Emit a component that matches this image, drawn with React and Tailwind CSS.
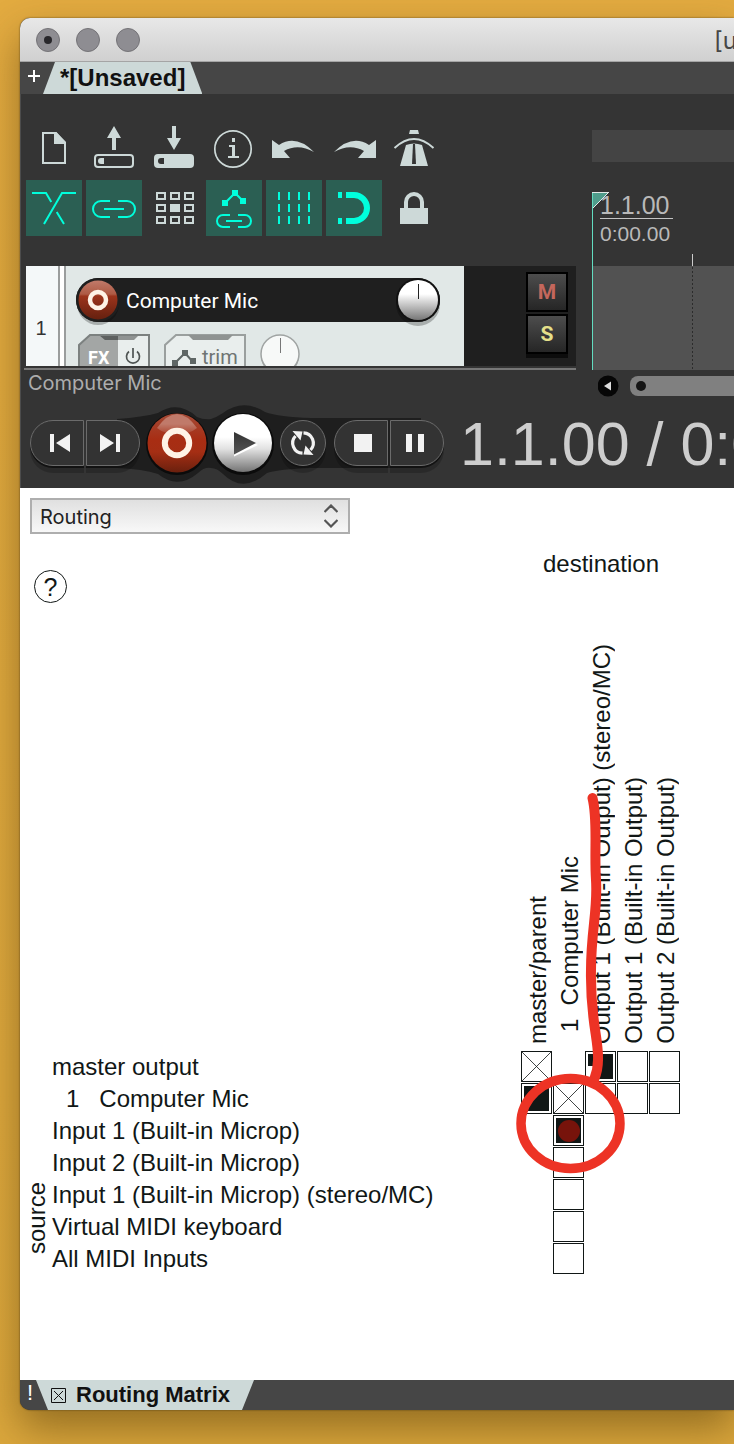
import React from "react";

const PALE = "#cdd9d8";
const TEAL = "#00ffdc";

const toolIcons = [
  {
    label: "New project",
    art: (
      <g>
        <path d="M17 13H30L39 23V43H17Z" fill="none" stroke={PALE} strokeWidth="2" />
        <path d="M28 12H30L40 22V24H28Z" fill={PALE} />
      </g>
    ),
  },
  {
    label: "Open project",
    art: (
      <g>
        <path d="M28 6L35 18H30V30H26V18H21Z" fill={PALE} />
        <rect x="9" y="35" width="38" height="12" rx="3" fill="none" stroke={PALE} strokeWidth="2" />
        <path d="M18 38V44H15a3 3 0 0 1 0-6Z" fill={PALE} />
      </g>
    ),
  },
  {
    label: "Save project",
    art: (
      <g>
        <path d="M26 6H30V18H35L28 30L21 18H26Z" fill={PALE} />
        <rect x="8" y="34" width="40" height="14" rx="4" fill={PALE} />
        <path d="M18 38V44H15a3 3 0 0 1 0-6Z" fill="#343434" />
      </g>
    ),
  },
  {
    label: "Project settings",
    art: (
      <g>
        <circle cx="27" cy="29" r="18.2" fill="none" stroke={PALE} strokeWidth="1.7" />
        <path d="M26 18h3v4h-3ZM23 25h6v11h4v2H22v-2h4v-9h-3Z" fill={PALE} />
      </g>
    ),
  },
  {
    label: "Undo",
    art: <path d="M6 20V38H24L18 31Q32 23 48 32Q30 14 13 25Z" fill={PALE} />,
  },
  {
    label: "Redo",
    art: <path d="M50 20V38H32L38 31Q24 23 8 32Q26 14 43 25Z" fill={PALE} />,
  },
  {
    label: "Metronome",
    art: (
      <g>
        <path d="M24 10H32L33 14H23Z" fill={PALE} />
        <path d="M8.500 28Q28 10 47.500 28" fill="none" stroke={PALE} strokeWidth="2" />
        <path d="M20 25Q28 22 36 25L42 46H14Z" fill={PALE} />
        <path d="M27 24H29L30 44H26Z" fill="#343434" />
      </g>
    ),
  },
  {
    label: "Auto crossfade",
    on: true,
    art: (
      <path d="M6 13H20L25.300 22M30.700 32L38 44M50 13H36L18 44" fill="none" stroke={TEAL} strokeWidth="2" />
    ),
  },
  {
    label: "Item grouping",
    on: true,
    art: (
      <path
        d="M24 21H15a8 8 0 0 0 0 16H24M32 21H41a8 8 0 0 1 0 16H32M18 29H38"
        fill="none"
        stroke={TEAL}
        strokeWidth="2"
      />
    ),
  },
  {
    label: "Ripple editing",
    art: (
      <g fill="none" stroke={PALE} strokeWidth="2">
        {[11, 25, 39].map((x) =>
          [13, 25, 37].map((y) => (
            <rect
              key={x + "-" + y}
              x={x}
              y={y}
              width="8"
              height="6"
              fill={x === 25 && y === 25 ? PALE : "none"}
            />
          ))
        )}
      </g>
    ),
  },
  {
    label: "Move envelopes with items",
    on: true,
    art: (
      <g>
        <path d="M19 23L29 13L37 21" fill="none" stroke={TEAL} strokeWidth="2" />
        <path d="M16 20h6v6h-6ZM26 10h6v6h-6ZM34 18h6v6h-6Z" fill={TEAL} />
        <path
          d="M24 35H17a6 6 0 0 0 0 12H24M32 35H39a6 6 0 0 1 0 12H32M20 41H36"
          fill="none"
          stroke={TEAL}
          strokeWidth="2"
        />
      </g>
    ),
  },
  {
    label: "Grid lines",
    on: true,
    art: (
      <path
        d="M13 12V44M23 12V44M33 12V44M43 12V44"
        stroke={TEAL}
        strokeWidth="2"
        strokeDasharray="8 4"
      />
    ),
  },
  {
    label: "Snap",
    on: true,
    art: (
      <g>
        <path d="M12 12h4v6h-4ZM12 38h4v6h-4Z" fill={TEAL} />
        <path d="M20 15H28a13 13 0 0 1 0 26H20" fill="none" stroke={TEAL} strokeWidth="6" />
      </g>
    ),
  },
  {
    label: "Lock",
    art: (
      <g>
        <rect x="14" y="28" width="28" height="16" fill={PALE} />
        <path d="M20 29V22a8 8 0 0 1 16 0V29" fill="none" stroke={PALE} strokeWidth="4" />
      </g>
    ),
  },
];

function Toolbar() {
  return (
    <div className="grid w-fit grid-cols-[repeat(7,56px)] gap-1 pl-1.5">
      {toolIcons.map((t) => (
        <button
          key={t.label}
          type="button"
          aria-label={t.label}
          className={t.on ? "size-14 bg-[#2b5f53]" : "size-14"}
        >
          <svg viewBox="0 0 56 56" className="size-14">
            {t.art}
          </svg>
        </button>
      ))}
    </div>
  );
}

function TrackPanel() {
  return (
    <div className="ml-1.5 mr-4 flex h-[100px] overflow-hidden bg-[#e1e8e7]">
      <div className="flex w-8 shrink-0 items-end justify-center bg-[#f4f8f9] pb-6 pr-0.5 text-[20px] leading-[28px] text-[#333]">
        1
      </div>
      <div className="w-2 shrink-0 border-x-2 border-[#9a9d9d] bg-white" />
      <div className="flex-1 pl-2.5 pr-6 pt-3">
        <div className="flex h-11 items-center rounded-full bg-[#1f1f1f]">
          <button type="button" aria-label="Record arm" className="size-11 shrink-0">
            <svg viewBox="0 0 44 44" className="size-11 overflow-visible">
              <defs>
                <linearGradient id="arm" x1="0" y1="0" x2="0" y2="1">
                  <stop offset="0" stopColor="#c07a6a" />
                  <stop offset="0.35" stopColor="#ae5a44" />
                  <stop offset="0.4" stopColor="#9c341c" />
                  <stop offset="1" stopColor="#65200f" />
                </linearGradient>
              </defs>
              <circle cx="22" cy="26" r="21" fill="#000" opacity="0.25" />
              <circle cx="22" cy="22" r="22" fill="#1f1f1f" />
              <circle cx="22" cy="22" r="19.500" fill="url(#arm)" />
              <circle cx="22" cy="22" r="8" fill="none" stroke="#fff3e6" strokeWidth="4.500" />
            </svg>
          </button>
          <span className="flex-1 whitespace-nowrap pl-1.5 pt-0.5 font-['Roboto',sans-serif] text-[21px] leading-[28px] text-white">
            Computer Mic
          </span>
          <button type="button" aria-label="Volume" className="size-11 shrink-0">
            <svg viewBox="0 0 44 44" className="size-11 overflow-visible">
              <defs>
                <linearGradient id="vol" x1="0" y1="0" x2="0" y2="1">
                  <stop offset="0.35" stopColor="#fff" />
                  <stop offset="0.5" stopColor="#dedede" />
                  <stop offset="1" stopColor="#777" />
                </linearGradient>
              </defs>
              <circle cx="22" cy="26" r="22" fill="#000" opacity="0.25" />
              <circle cx="22" cy="22" r="22" fill="#111" />
              <circle cx="22" cy="22" r="20" fill="url(#vol)" />
              <path d="M22.500 6V21" stroke="#222" strokeWidth="1" />
            </svg>
          </button>
        </div>
        <div className="flex gap-3.5 pl-0.5 pt-3">
          <button type="button" aria-label="FX" className="h-8 w-[72px] shrink-0">
            <svg viewBox="0 0 72 32" className="h-8 w-[72px]">
              <path d="M1 32V11L12 1H71V32Z" fill="#e9eeed" />
              <path d="M1 32V11L12 1H40V32Z" fill="#a3a6a5" />
              <path d="M21 1H61L56 6H27Z" fill="#8f9392" />
              <path d="M21 1H40V6H27Z" fill="#5d605f" />
              <path d="M1 33V11L12 1H71V33" fill="none" stroke="#7c8180" strokeWidth="2" />
              <path d="M51 17.500a6.500 6.500 0 1 0 8 0M55 14V24" fill="none" stroke="#4f5453" strokeWidth="1.700" />
              <text x="10" y="30" fontSize="18" fontWeight="700" fill="#fff" fontFamily="Roboto, sans-serif">
                FX
              </text>
            </svg>
          </button>
          <button type="button" aria-label="trim" className="h-8 w-[82px] shrink-0">
            <svg viewBox="0 0 82 32" className="h-8 w-[82px]">
              <path d="M1 33V11L12 1H81V33" fill="#e9eeed" stroke="#9a9f9e" strokeWidth="2" />
              <path d="M24 1H69L64 6H29Z" fill="#8f9392" />
              <path d="M11 29L21 19L29 28" fill="none" stroke="#5f6665" strokeWidth="2" />
              <path d="M8 26h6v6h-6ZM18 16h6v6h-6ZM26 24h6v6h-6Z" fill="#5f6665" />
              <text x="38" y="30" fontSize="20" fill="#6e7473" fontFamily="Roboto, sans-serif">
                trim
              </text>
            </svg>
          </button>
          <button type="button" aria-label="Pan" className="size-10 shrink-0">
            <svg viewBox="0 0 40 40" className="size-10">
              <circle cx="20" cy="22" r="19" fill="#9b9f9e" />
              <circle cx="20" cy="20" r="19" fill="#f7f9f8" stroke="#a0a4a3" strokeWidth="1.500" />
              <path d="M20.500 4V19" stroke="#777" strokeWidth="1" />
            </svg>
          </button>
        </div>
      </div>
      <div className="flex w-28 shrink-0 flex-col items-end gap-0.5 bg-[#1f1f1f] pr-2 pt-1.5 font-['Roboto',sans-serif] text-[21px] font-bold leading-[24px]">
        <button
          type="button"
          className="h-10 w-[42px] border-2 border-black bg-linear-to-b from-[#4d4d4d] to-[#262626] text-[#c4675c]"
        >
          M
        </button>
        <button
          type="button"
          className="h-10 w-[42px] border-2 border-black bg-linear-to-b from-[#4d4d4d] to-[#262626] text-[#e5e08a] shadow-[0_4px_0_#0c0c0c]"
        >
          S
        </button>
      </div>
    </div>
  );
}

function Arrange() {
  return (
    <div className="min-w-0 flex-1 pt-9">
      <div className="h-8 bg-[#444]" />
      <div className="relative mt-[30px]">
        <div className="h-[74px] overflow-hidden whitespace-nowrap pl-2 text-[#b9b9b9]">
          <div className="w-[73px] border-b border-[#c4c4c4] text-[25px] leading-[26px]">1.1.00</div>
          <div className="text-[21px] leading-[29px]">0:00.00</div>
        </div>
        <div className="h-[104px] bg-[#525252]" />
        <svg viewBox="0 0 120 178" className="pointer-events-none absolute left-0 top-0 h-[178px] w-[120px]">
          <path d="M1 1H16L1 16Z" fill="#4f9c8b" />
          <path d="M0 0.500H17M16 1L1 16" stroke="#e2e8e6" strokeWidth="1" />
          <path d="M0.500 1V178" stroke="#62dcc0" strokeWidth="1" />
          <path d="M100.500 62V74" stroke="#ccc" strokeWidth="1" />
          <path d="M100.500 75V178" stroke="#2c2c2c" strokeWidth="1" strokeDasharray="2 2" />
        </svg>
      </div>
      <div className="flex h-8 items-center gap-2.5 pl-1.5">
        <button type="button" aria-label="Scroll left" className="size-[22px] shrink-0">
          <svg viewBox="0 0 22 22" className="size-[22px]">
            <circle cx="10" cy="11" r="10.500" fill="#060606" />
            <path d="M13 6.500V15.500L6 11Z" fill="#ddd" />
          </svg>
        </button>
        <div className="flex h-5 flex-1 items-center rounded-l-lg bg-[#808080] pl-1.5">
          <span className="size-2.5 rounded-full bg-[#151515]" />
        </div>
      </div>
    </div>
  );
}

const pill = "h-[46px] w-[54px] border border-[#6b6b6b] bg-[#333] shadow-[0_2px_0_#121212,0_7px_0_rgba(0,0,0,0.2)]";

function Transport() {
  return (
    <div className="relative flex h-[86px] items-center overflow-hidden pb-1 pl-[9px]">
      <svg viewBox="0 0 430 86" className="absolute left-0 top-0 h-[86px] w-[430px]">
        <path
          d="M96 17Q122 15 137 11Q157 -2 176 15Q183 18 190 17Q196 15 202 11Q222 -4 244 10Q258 15 290 16H400V66H290Q258 67 246 71Q222 92 202 72Q196 66 190 66Q183 65 177 71Q157 88 137 72Q122 67 96 66Z"
          fill="#1e1e1e"
        />
      </svg>
      <div className="relative flex items-center">
        <button type="button" aria-label="Go to start" className={pill + " rounded-l-full"}>
          <svg viewBox="1 1 52 44" className="h-[44px] w-[52px]">
            <path d="M20 14h4v18h-4ZM40 14V32L26 23Z" fill="#f2f2f2" />
          </svg>
        </button>
        <button type="button" aria-label="Go to end" className={pill + " ml-0.5 rounded-r-full"}>
          <svg viewBox="1 1 52 44" className="h-[44px] w-[52px]">
            <path d="M30 14h4v18h-4ZM14 14V32L28 23Z" fill="#f2f2f2" />
          </svg>
        </button>
        <button type="button" aria-label="Record" className="ml-1.5 size-[62px]">
          <svg viewBox="0 0 62 62" className="size-[62px] overflow-visible">
            <defs>
              <linearGradient id="rec" x1="0" y1="0" x2="0" y2="1">
                <stop offset="0" stopColor="#a34a36" />
                <stop offset="0.45" stopColor="#a82d13" />
                <stop offset="0.65" stopColor="#a52e14" />
                <stop offset="1" stopColor="#6a200e" />
              </linearGradient>
              <linearGradient id="gloss" x1="0" y1="0" x2="0" y2="1">
                <stop offset="0.5" stopColor="#c07a6a" />
                <stop offset="1" stopColor="#ad4630" />
              </linearGradient>
            </defs>
            <circle cx="31" cy="32" r="31" fill="#0b0b0b" />
            <circle cx="31" cy="31" r="29.500" fill="url(#rec)" />
            <path d="M11 16Q31 -12 51 16Q44 22 31 22T11 16Z" fill="url(#gloss)" />
            <circle cx="31" cy="31" r="12.200" fill="none" stroke="#fff3e6" strokeWidth="6" />
          </svg>
        </button>
        <button type="button" aria-label="Play" className="ml-1 size-[62px]">
          <svg viewBox="0 0 62 62" className="size-[62px] overflow-visible">
            <defs>
              <linearGradient id="ply" x1="0" y1="0" x2="0" y2="1">
                <stop offset="0.4" stopColor="#fff" />
                <stop offset="0.6" stopColor="#e2e2e2" />
                <stop offset="1" stopColor="#747474" />
              </linearGradient>
              <linearGradient id="tri" x1="0" y1="0" x2="0" y2="1">
                <stop offset="0" stopColor="#333" />
                <stop offset="1" stopColor="#555" />
              </linearGradient>
            </defs>
            <circle cx="31" cy="32" r="31" fill="#0b0b0b" />
            <circle cx="31" cy="31" r="29" fill="url(#ply)" />
            <path d="M22 21.500V44.500L46 33Z" fill="#fff" />
            <path d="M22 20V42.500L44 31Z" fill="url(#tri)" />
          </svg>
        </button>
        <button
          type="button"
          aria-label="Repeat"
          className="ml-1.5 size-[46px] rounded-full border border-[#6b6b6b] bg-[#333] shadow-[0_2px_0_#121212,0_7px_0_rgba(0,0,0,0.2)]"
        >
          <svg viewBox="1 1 44 44" className="size-[44px]">
            <path
              d="M15.500 16A10.200 10.200 0 0 0 22.500 33.200M30.500 30A10.200 10.200 0 0 0 23.500 12.800"
              fill="none"
              stroke="#f2f2f2"
              strokeWidth="3.200"
            />
            <path d="M12.500 11L22.500 11.500L20.500 20.500ZM33.500 35L23.500 34.500L25.500 25.500Z" fill="#f2f2f2" />
          </svg>
        </button>
        <button type="button" aria-label="Stop" className={pill + " ml-2 rounded-l-full"}>
          <svg viewBox="1 1 52 44" className="h-[44px] w-[52px]">
            <path d="M20 14h18v18H20Z" fill="#f2f2f2" />
          </svg>
        </button>
        <button type="button" aria-label="Pause" className={pill + " ml-0.5 rounded-r-full"}>
          <svg viewBox="1 1 52 44" className="h-[44px] w-[52px]">
            <path d="M16 14h6v18h-6ZM28 14h6v18h-6Z" fill="#f2f2f2" />
          </svg>
        </button>
      </div>
      <output className="relative ml-4 whitespace-nowrap pt-0.5 text-[61px] leading-[64px] text-[#cdcdcd]">
        1.1.00 / 0:0
      </output>
    </div>
  );
}

/* Cell kinds: o = free slot, on = routed, x = not allowed, rec = record input, "" = no slot */
const destinations = [
  "master/parent",
  "1  Computer Mic",
  "Output 1 (Built-in Output) (stereo/MC)",
  "Output 1 (Built-in Output)",
  "Output 2 (Built-in Output)",
];
const sources = [
  { name: "master output", cells: ["x", "", "on", "o", "o"] },
  { name: "1   Computer Mic", indent: true, cells: ["on", "x", "o", "o", "o"] },
  { name: "Input 1 (Built-in Microp)", cells: ["", "rec", "", "", ""] },
  { name: "Input 2 (Built-in Microp)", cells: ["", "o", "", "", ""] },
  { name: "Input 1 (Built-in Microp) (stereo/MC)", cells: ["", "o", "", "", ""] },
  { name: "Virtual MIDI keyboard", cells: ["", "o", "", "", ""] },
  { name: "All MIDI Inputs", cells: ["", "o", "", "", ""] },
];

function Slot({ kind, label }) {
  if (kind === "") return null;
  if (kind === "x")
    return (
      <svg viewBox="0 0 31 31" className="block size-[31px] overflow-visible" fill="none" stroke="#111716">
        <path d="M0.500 0.500H30.500V30.500H0.500Z" />
        <path d="M0 0L31 31M31 0L0 31" strokeWidth="0.800" />
      </svg>
    );
  if (kind === "rec")
    return (
      <button
        type="button"
        aria-label={label}
        className="flex size-[31px] items-center justify-center border border-[#111716] bg-[#111716] shadow-[inset_0_0_0_2px_#fff]"
      >
        <span className="size-[22px] rounded-full bg-[#77130b]" />
      </button>
    );
  return (
    <input
      type="checkbox"
      aria-label={label}
      defaultChecked={kind === "on"}
      className="block size-[31px] appearance-none border border-[#111716] bg-clip-content p-0.5 checked:bg-[#111716]"
    />
  );
}

function Matrix() {
  return (
    <table className="w-[661px] table-fixed border-collapse text-left text-[24px] leading-[28px] text-[#111716]">
      <colgroup>
        <col className="w-8" />
        <col />
        <col className="w-8" />
        <col className="w-8" />
        <col className="w-8" />
        <col className="w-8" />
        <col className="w-8" />
      </colgroup>
      <thead>
        <tr className="h-[69px]">
          <td colSpan={2} className="p-0 pl-3.5 align-bottom">
            <button
              type="button"
              aria-label="Help"
              className="flex size-[33px] items-center justify-center rounded-full border border-[#111716] text-[25px]"
            >
              ?
            </button>
          </td>
          <th colSpan={5} scope="colgroup" className="p-0 pt-4 text-center align-top font-normal">
            destination
          </th>
        </tr>
        <tr className="h-[448px]">
          <td colSpan={2} />
          {destinations.map((d, i) => (
            <th key={i} scope="col" className="p-0 pb-[7px] align-bottom font-normal">
              <span
                className={
                  i === 1
                    ? "mb-3 block h-fit w-8 rotate-180 whitespace-pre pr-[3px] leading-[28px] [writing-mode:vertical-rl]"
                    : "block h-fit w-8 rotate-180 whitespace-pre pr-[3px] leading-[28px] [writing-mode:vertical-rl]"
                }
              >
                {d}
              </span>
            </th>
          ))}
        </tr>
      </thead>
      <tbody>
        {sources.map((s, r) => (
          <tr key={s.name} className="h-8">
            {r === 0 && (
              <th rowSpan={7} scope="rowgroup" className="p-0 pb-[21px] align-bottom font-normal">
                <span className="block w-8 rotate-180 pr-[3px] [writing-mode:vertical-rl]">source</span>
              </th>
            )}
            <th
              scope="row"
              className={s.indent ? "whitespace-pre p-0 pl-3.5 font-normal" : "whitespace-pre p-0 font-normal"}
            >
              {s.name}
            </th>
            {s.cells.map((c, i) => (
              <td key={i} className="p-0 align-top">
                <Slot kind={c} label={s.name + " to " + destinations[i]} />
              </td>
            ))}
          </tr>
        ))}
      </tbody>
    </table>
  );
}

export default function App() {
  return (
    <div className="flex min-h-screen flex-col overflow-hidden bg-linear-to-b from-[#e3ab40] to-[#dba73c] pb-[34px] pl-5 pt-[18px] font-['Liberation_Sans',Arial,sans-serif]">
      <div className="flex flex-1 flex-col rounded-l-[10px] bg-[#343434] shadow-[0_18px_40px_rgba(60,40,0,0.45),0_0_2px_rgba(0,0,0,0.6)]">
        <header className="flex h-11 items-center justify-between overflow-hidden rounded-tl-[10px] border-b border-[#a5a5a5] bg-linear-to-b from-[#e8e8e8] to-[#d0d0d0] pl-4">
          <div className="flex gap-4">
            <button
              type="button"
              aria-label="Close"
              className="flex size-6 items-center justify-center rounded-full border border-[#747377] bg-[#8e8d92]"
            >
              <span className="size-2 rounded-full bg-[#28272b]" />
            </button>
            <button type="button" aria-label="Minimize" className="size-6 rounded-full border border-[#747377] bg-[#8e8d92]" />
            <button type="button" aria-label="Zoom" className="size-6 rounded-full border border-[#747377] bg-[#8e8d92]" />
          </div>
          <h1 className="w-5 whitespace-nowrap pt-0.5 font-['Inter',sans-serif] text-[24px] leading-[30px] text-[#464646]">
            [u
          </h1>
        </header>

        <nav className="flex h-8 bg-[#464646]">
          <button type="button" aria-label="New project tab" className="w-[23px] pl-2">
            <svg viewBox="0 0 12 12" className="mb-1 size-3">
              <path d="M6 0V12M0 6H12" stroke="#fff" strokeWidth="2" />
            </svg>
          </button>
          <a
            href="#project"
            className="flex items-center bg-[#cdd9d8] px-[17px] text-[24px] font-bold leading-[28px] text-[#111] [clip-path:polygon(12px_0,calc(100%-12px)_0,100%_100%,0_100%)]"
          >
            *[Unsaved]
          </a>
        </nav>

        <section className="border-l border-[#4c4c4c] bg-[#343434]">
          <div className="-ml-px flex">
            <div className="w-[572px] shrink-0 pt-[26px]">
              <Toolbar />
              <div className="h-[30px]" />
              <TrackPanel />
              <div className="ml-1 mr-4 mt-0.5 h-0.5 bg-[#777]" />
              <p className="pl-2 font-['Inter',sans-serif] text-[20px] leading-[26px] text-[#adadad]">Computer Mic</p>
            </div>
            <Arrange />
          </div>
          <Transport />
        </section>

        <main className="relative flex-1 bg-white">
          <div className="relative ml-2.5 w-80 pt-2.5">
            <select
              aria-label="View"
              className="h-9 w-full appearance-none border-2 border-[#aeaeae] bg-linear-to-b from-[#e0e0e0] to-[#f8f8f8] pl-2 pt-0.5 font-['Inter',sans-serif] text-[20px] leading-[28px] text-[#222]"
            >
              <option>Routing</option>
            </select>
            <svg viewBox="0 0 14 24" className="pointer-events-none absolute bottom-1.5 right-3 h-6 w-3.5">
              <path d="M0.500 8L7 1.500L13.500 8M0.500 16L7 22.500L13.500 16" fill="none" stroke="#555" strokeWidth="2.200" />
            </svg>
          </div>
          <Matrix />
          <svg viewBox="0 0 160 400" className="pointer-events-none absolute left-[480px] top-[292px] h-[400px] w-[160px]">
            <path d="M86 286H95V301H86Z" fill="#fff" />
            <path
              d="M92.500 18C98 40 94 70 96 100C98 130 91 150 91 190C90 240 99 260 98 280Q98 290 94 300"
              fill="none"
              stroke="#ed3325"
              strokeWidth="10"
              strokeLinecap="round"
              strokeLinejoin="round"
            />
            <ellipse cx="70.500" cy="343.500" rx="49.500" ry="45" fill="none" stroke="#ed3325" strokeWidth="9.500" />
          </svg>
        </main>

        <footer className="flex h-[30px] overflow-hidden rounded-bl-[10px] bg-[#464646]">
          <span className="w-4 pl-[7px] text-[22px] leading-[25px] text-white">!</span>
          <div className="flex items-center bg-[#cdd9d8] pl-[15px] pr-6 text-[22px] font-bold leading-[28px] text-[#111] [clip-path:polygon(0_0,100%_0,calc(100%-12px)_100%,12px_100%)]">
            <button type="button" aria-label="Close tab" className="mr-2.5 size-[15px]">
              <svg viewBox="0 0 15 15" className="size-[15px]" fill="none" stroke="#111">
                <path d="M0.500 0.500H14.500V14.500H0.500Z" />
                <path d="M3 3L12 12M12 3L3 12" />
              </svg>
            </button>
            Routing Matrix
          </div>
        </footer>
      </div>
    </div>
  );
}
